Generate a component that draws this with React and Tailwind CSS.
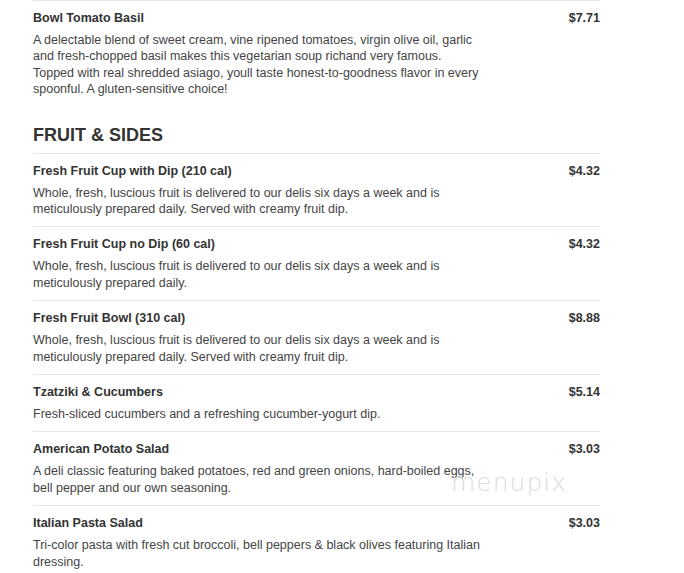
import React from 'react';

const items = [
  {
    name: 'Fresh Fruit Cup with Dip (210 cal)',
    price: '$4.32',
    desc: 'Whole, fresh, luscious fruit is delivered to our delis six days a week and is meticulously prepared daily. Served with creamy fruit dip.',
  },
  {
    name: 'Fresh Fruit Cup no Dip (60 cal)',
    price: '$4.32',
    desc: 'Whole, fresh, luscious fruit is delivered to our delis six days a week and is meticulously prepared daily.',
  },
  {
    name: 'Fresh Fruit Bowl (310 cal)',
    price: '$8.88',
    desc: 'Whole, fresh, luscious fruit is delivered to our delis six days a week and is meticulously prepared daily. Served with creamy fruit dip.',
  },
  {
    name: 'Tzatziki & Cucumbers',
    price: '$5.14',
    desc: 'Fresh-sliced cucumbers and a refreshing cucumber-yogurt dip.',
  },
  {
    name: 'American Potato Salad',
    price: '$3.03',
    desc: 'A deli classic featuring baked potatoes, red and green onions, hard-boiled eggs, bell pepper and our own seasoning.',
    watermark: true,
  },
  {
    name: 'Italian Pasta Salad',
    price: '$3.03',
    desc: 'Tri-color pasta with fresh cut broccoli, bell peppers & black olives featuring Italian dressing.',
  },
];

function MenuItem({ item }) {
  return (
    <div className="relative border-t border-[#e6e6e6] pt-[9px] pb-[9px]">
      <div className="flex items-start justify-between">
        <h4 className="text-[12.5px] leading-[16px] font-bold text-[#333]">{item.name}</h4>
        <span className="text-[12.5px] leading-[16px] font-bold text-[#333]">{item.price}</span>
      </div>
      <p className="mt-[6px] w-[452px] text-[12.5px] leading-[16.4px] text-[#444]">{item.desc}</p>
      {item.watermark && (
        <span className="absolute left-[418px] top-[36px] text-[25px] leading-[30px] tracking-[1px] text-[#dcdcdc] font-['DejaVu_Sans',sans-serif] [font-weight:200]">
          menupix
        </span>
      )}
    </div>
  );
}

export default function App() {
  return (
    <div className="h-[573px] w-[684px] overflow-hidden bg-white font-['Liberation_Sans',Arial,sans-serif]">
      <div className="ml-[33px] w-[567px]">
        {/* Previous section tail */}
        <div className="border-t border-[#e6e6e6] pt-[9px] pb-[9px]">
          <div className="flex items-start justify-between">
            <h4 className="text-[12.5px] leading-[16px] font-bold text-[#333]">Bowl Tomato Basil</h4>
            <span className="text-[12.5px] leading-[16px] font-bold text-[#333]">$7.71</span>
          </div>
          <p className="mt-[6px] w-[452px] text-[12.5px] leading-[16.4px] text-[#444]">
            A delectable blend of sweet cream, vine ripened tomatoes, virgin olive oil, garlic and fresh-chopped basil makes this vegetarian soup richand very famous. Topped with real shredded asiago, youll taste honest-to-goodness flavor in every spoonful. A gluten-sensitive choice!
          </p>
        </div>

        <h3 className="mt-[17px] mb-[7px] text-[18px] leading-[22px] font-bold text-[#333]">FRUIT &amp; SIDES</h3>

        {items.map((item) => (
          <MenuItem key={item.name} item={item} />
        ))}
      </div>
    </div>
  );
}
